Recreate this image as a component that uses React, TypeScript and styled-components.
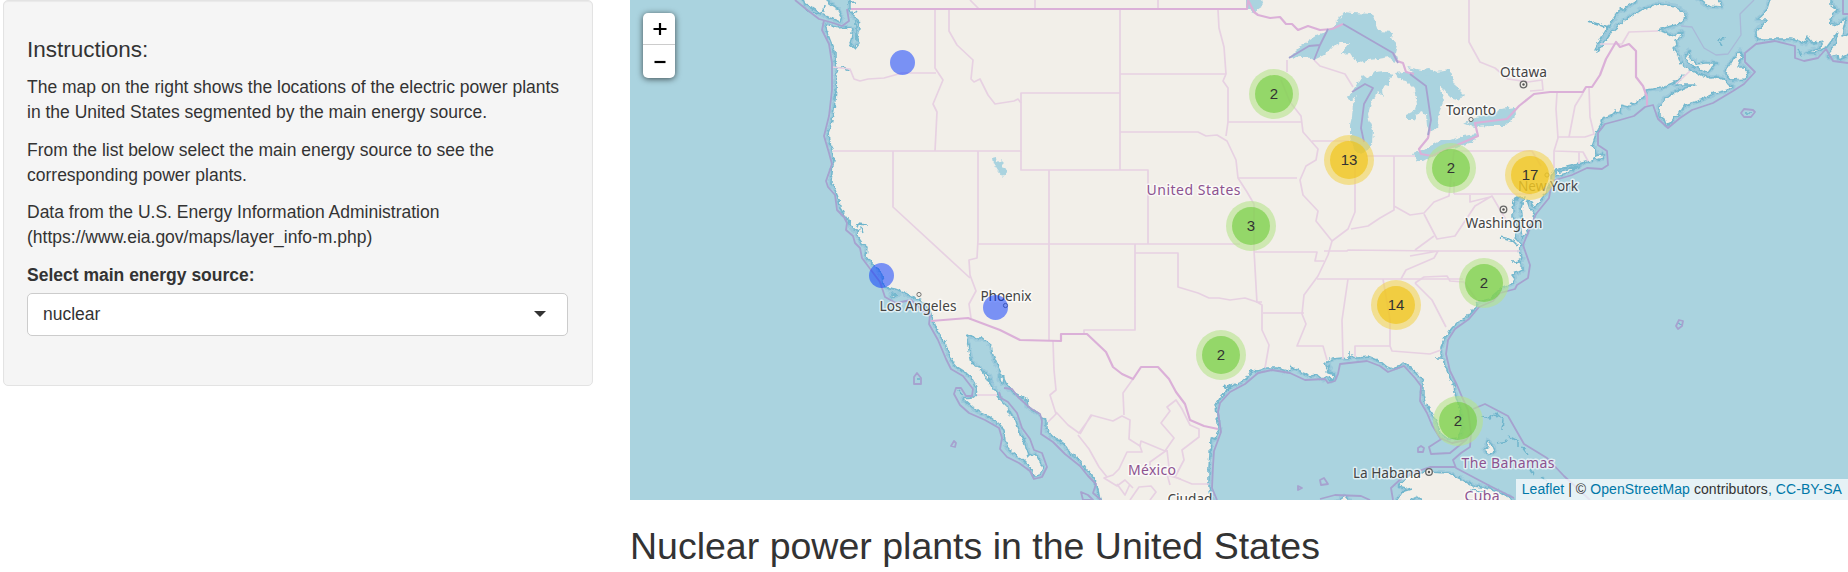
import React from 'react';
import styled, { createGlobalStyle } from 'styled-components';

const Global = createGlobalStyle`
  * { box-sizing: border-box; }
  body { margin: 0; background: #fff; color: #333; overflow: hidden;
    font: 17.5px/25px "Liberation Sans", Arial, sans-serif; }
`;

const Page = styled.main`
  display: grid;
  grid-template-columns: 590px 1218px;
  column-gap: 37px;
  padding-left: 3px;
  height: 572px;
  align-items: start;
`;
const Well = styled.aside`
  height: 386px;
  padding: 36px 24px 0 23px;
  background: #f5f5f5;
  border: 1px solid #e3e3e3;
  border-radius: 5px;
  box-shadow: inset 0 1px 1px rgba(0, 0, 0, 0.05);
`;
const Title = styled.h4`
  margin: 0 0 13px;
  font-size: 22.5px;
  font-weight: 400;
  line-height: 25px;
`;
const Paragraph = styled.p`
  margin: 0 0 12.5px;
`;
const Label = styled.label`
  display: block;
  margin-bottom: 5px;
  font-weight: 700;
`;
const Select = styled.div`
  display: flex;
  align-items: center;
  justify-content: space-between;
  height: 43px;
  padding: 0 21px 0 15px;
  background: #fff;
  border: 1px solid #ccc;
  border-radius: 5px;
`;
const Caret = styled.i`
  border: 6px solid transparent;
  border-top-color: #333;
  border-bottom: 0;
`;
const Content = styled.section`
  display: flex;
  flex-direction: column;
`;
const MapFrame = styled.div`
  position: relative;
  height: 500px;
  overflow: hidden;
  background: #aad3df;
`;
const MapDrawing = styled.svg`
  display: block;
`;
const Zoom = styled.div`
  position: absolute;
  left: 13px;
  top: 13px;
  width: 32px;
  border-radius: 5px;
  background: #fff;
  box-shadow: 0 1px 6px rgba(0, 0, 0, 0.65);
`;
const ZoomButton = styled.button`
  display: flex;
  align-items: center;
  justify-content: center;
  width: 32px;
  height: 31px;
  padding: 0 0 0 1px;
  border: 0;
  background: none;
  & + & { border-top: 1px solid #ccc; height: 34px; }
`;
const Cluster = styled.div<{ $x: number; $y: number; $tone: 'green' | 'yellow' }>`
  position: absolute;
  left: ${p => p.$x - 25}px;
  top: ${p => p.$y - 25}px;
  width: 50px;
  height: 50px;
  padding: 6px;
  border-radius: 50%;
  background: ${p => (p.$tone === 'green' ? 'rgba(181,226,140,.6)' : 'rgba(241,211,87,.6)')};
`;
const Count = styled.span<{ $tone: 'green' | 'yellow' }>`
  display: block;
  border-radius: 50%;
  height: 38px;
  text-align: center;
  font-size: 15px;
  line-height: 38px;
  background: ${p => (p.$tone === 'green' ? 'rgba(110,204,57,.6)' : 'rgba(240,194,12,.6)')};
`;
const Plant = styled.div<{ $x: number; $y: number }>`
  position: absolute;
  left: ${p => p.$x - 12.5}px;
  top: ${p => p.$y - 12.5}px;
  width: 25px;
  height: 25px;
  border-radius: 50%;
  background: rgba(0, 51, 255, 0.5);
`;
const Attribution = styled.footer`
  position: absolute;
  right: 0;
  bottom: 0;
  height: 21px;
  padding: 0 6px;
  font-size: 14px;
  letter-spacing: 0.07px;
  line-height: 20px;
  white-space: nowrap;
  background: rgba(255, 255, 255, 0.7);
`;
const Link = styled.a`
  color: #0078a8;
`;
const Heading = styled.h2`
  margin: 26px 0 0;
  font-size: 37.5px;
  font-weight: 400;
  line-height: 41px;
`;

const mainland =
  'M1641 -8L1635 2 1618 12 1606 30 1595 50 1598 51 1611 32 1625 20 1641 10 1658 4 1675 6 1684 12 1686 17 1681 23 1668 27 1658 30 1664 32 1671 36 1683 32 1682 36 1676 40 1677 45 1674 48 1678 55 1681 63 1686 67 1701 75 1711 78 1718 77 1725 80 1728 85 1733 86 1728 90 1715 93 1701 100 1685 105 1680 113 1675 117 1672 122 1666 125 1664 119 1659 116 1659 107 1663 101 1675 92 1685 88 1695 85 1676 85 1683 75 1675 82 1661 88 1646 90 1645 97 1638 100 1635 104 1631 103 1629 107 1621 105 1620 113 1616 111 1612 115 1603 118 1601 124 1597 131 1595 137 1593 143 1591 146 1595 149 1596 155 1591 161 1583 163 1571 166 1555 170 1551 176 1551 183 1543 197 1535 208 1531 202 1527 200 1530 209 1534 213 1532 222 1527 232 1522 239 1521 229 1523 220 1521 208 1524 198 1519 197 1513 206 1513 217 1516 224 1517 230 1515 238 1522 245 1519 251 1522 258 1517 262 1522 266 1522 270 1512 275 1515 279 1513 283 1503 287 1497 293 1490 299 1478 302 1473 310 1467 317 1458 322 1452 328 1445 338 1441 347 1441 355 1443 360 1448 373 1454 385 1455 393 1460 410 1462 428 1458 438 1448 439 1440 433 1437 423 1432 413 1426 405 1423 395 1423 382 1417 373 1410 367 1403 363 1398 367 1392 369 1387 367 1380 361 1370 357 1357 358 1352 355 1348 359 1342 358 1332 359 1325 363 1327 368 1330 366 1327 372 1334 373 1335 378 1331 381 1328 376 1323 379 1318 375 1310 376 1303 373 1293 368 1288 371 1277 368 1267 368 1257 371 1252 370 1247 377 1240 383 1230 387 1225 392 1220 398 1216 405 1217 417 1219 428 1216 437 1211 440 1210 453 1209 467 1209 487 1215 510 1102 510 1098 490 1095 480 1087 470 1077 458 1070 453 1063 443 1053 437 1046 429 1046 420 1037 413 1028 407 1027 400 1013 392 1007 385 1003 377 998 367 993 355 991 345 982 338 975 338 968 334 967 340 969 350 972 363 980 368 987 378 992 387 997 392 1000 400 1007 407 1010 415 1015 418 1018 427 1022 437 1026 447 1029 456 1035 454 1038 458 1043 468 1040 475 1034 476 1030 467 1023 460 1013 453 1008 448 1005 440 1004 429 998 423 990 417 980 413 972 407 963 399 972 398 976 395 977 387 972 378 965 372 957 367 953 362 948 352 945 342 938 332 933 320 930 310 923 302 915 298 903 292 895 289 884 287 882 275 877 268 870 262 866 257 867 247 862 243 857 236 859 230 853 230 850 223 845 216 840 208 839 200 835 190 831 183 832 172 834 160 832 150 829 140 828 133 831 125 834 110 836 90 837 75 835 60 834 50 830 40 827 32 825 24 830 25 838 28 846 27 853 29 851 40 850 44 855 48 859 43 857 36 860 30 858 20 853 16 850 10 850 -8Z';

const islands = [
  'M800 -8L805 4 812 8 820 13 830 18 840 22 842 16 838 9 830 4 823 -8Z',
  'M1772 -8L1766 12 1757 20 1767 20 1756 32 1757 39 1773 39 1790 39 1806 43 1808 37 1813 43 1824 41 1819 49 1805 53 1815 53 1827 47 1838 32 1835 45 1829 52 1829 57 1838 55 1839 60 1846 57 1856 48 1856 29 1842 36 1846 18 1838 25 1829 23 1833 14 1838 10 1831 5 1831 -8Z',
  'M1695 -4L1708 6 1722 7 1720 1 1714 -4Z',
  'M1740 51L1742 56 1738 67 1744 67 1749 73 1746 79 1731 80 1726 74 1727 68 1733 60Z',
  'M1689 51L1685 57 1690 65 1702 70 1708 73 1714 65 1718 63 1706 63 1697 64 1690 58Z',
  'M1555 172L1565 170 1579 166 1568 173 1556 176Z',
  'M1593 157L1603 154 1603 158 1597 160Z',
  'M1488 441L1493 446 1495 451 1490 454 1484 450 1487 447Z',
  'M1391 510L1406 488 1398 486 1410 475 1426 472 1448 473 1463 480 1473 486 1490 488 1510 497 1518 510 1432 510 1418 497Z',
  'M1331 506L1345 496 1354 506Z',
  'M983 371L989 376 990 381 985 377Z M1000 375L1004 377 1003 383 1000 380Z M892 294L898 295 892 297Z'
];

const lakes = [
  'M1289 58L1302 45 1317 35 1329 31 1339 19 1344 12 1353 13 1372 14 1378 31 1393 32 1391 38 1397 45 1395 53 1399 59 1393 63 1390 57 1378 59 1369 60 1362 63 1355 61 1350 53 1341 54 1349 43 1340 43 1333 46 1324 55 1314 60 1308 57 1300 57Z',
  'M1350 101L1348 98 1357 84 1363 75 1368 79 1375 72 1384 71 1393 74 1389 80 1389 86 1385 85 1383 90 1384 97 1378 91 1372 100 1368 114 1369 120 1373 130 1372 143 1366 153 1355 152 1350 137 1350 125 1352 117 1353 104 1357 95Z',
  'M1395 73L1412 71 1437 75 1440 89 1444 100 1439 113 1437 128 1430 131 1427 126 1426 114 1420 111 1414 119 1407 119 1407 114 1415 110 1417 104 1414 88 1407 81 1400 80Z',
  'M1407 67L1422 70 1430 69 1437 72 1450 70 1453 81 1457 88 1465 96 1460 97 1461 101 1453 99 1447 93 1444 89 1438 84 1436 78 1428 76 1412 71Z',
  'M1413 154L1425 149 1441 140 1450 140 1463 136 1478 134 1473 142 1450 149 1439 153 1424 161 1417 161Z',
  'M1464 124L1475 118 1498 112 1500 109 1515 107 1516 116 1506 126 1490 126 1475 127Z',
  'M992 158L996 157 997 162 1001 161 1004 164 1001 167 1004 168 1008 171 1003 177 998 171 993 163Z',
  'M1246 -4L1246 8 1254 12 1263 6 1260 -4Z'
];

const nationalBorders = [
  'M851 9H1247L1248 0 1254 12 1258 15 1270 18 1280 17 1286 24 1292 24 1298 30 1308 26 1320 30 1332 29 1343 24',
  'M1393 53L1397 61 1403 63 1406 72 1414 74',
  'M1430 128L1428 138 1419 149 1421 154 1432 156 1444 150 1457 145 1478 136 1475 123 1507 119 1519 106 1534 94 1550 92 1583 92 1586 87 1592 87 1600 75 1606 59 1616 42 1620 47 1629 44 1636 51 1636 77 1643 86 1647 97 1647 106',
  'M931 321L968 318 1000 330 1020 340 1061 341 1061 334 1087 334 1106 352 1113 367 1122 374 1133 379 1141 367 1158 367 1169 379 1176 392 1185 404 1190 420 1204 426 1218 429'
];

const waterBorders = [
  'M1343 24L1393 53 1398 63 M1289 58L1309 46 1320 45 1314 60 M1328 29L1320 45',
  'M1410 74L1426 86 1431 120 1428 135 M1352 92L1365 84 1373 88 1364 104 1361 128 1364 142'
];

const stateBorders = [
  'M1035 0V9 M1158 0V9 M970 0L979 9 M1469 0V42L1480 62 1495 68 1508 79 1528 82 1542 80 1543 90 1530 91',
  'M832 67L850 69 854 79 860 81 868 79 884 78 902 73H936 M935 10V68L943 80 933 104 937 112 935 151',
  'M833 151H1021V93H1120 M893 151V207L970 278 M978 151V240L977 258 969 260 970 275 976 291 969 304 971 318',
  'M949 10V31L957 45 973 60 971 79 974 82 980 79 988 95 995 104 1014 101 1018 99 1021 103',
  'M1021 151V170H1148V244 M1120 10V170 M1049 170V340 M978 244H1240 M1120 74H1226 M1120 132H1198L1206 136 1217 135 1227 141 1236 160 1238 178 1247 192 1254 204V250L1257 303',
  'M1218 10L1219 28 1224 47 1226 74 1223 81 1228 88V122L1226 136',
  'M1228 122H1301 M1287 60V72 M1281 80L1290 102 1301 116 1303 132 1318 149 1316 160 1306 166 1300 180 1303 195 1318 211 1316 221 1332 241 1328 255 1318 276 1304 295 1302 314 1306 324 1297 346H1323L1327 360',
  'M1238 178H1297 M1312 141H1349 M1366 156H1415 M1355 160V212L1348 229 1332 241 M1394 156V210L1380 218 1368 226 1351 229 M1394 206L1410 215 1424 213 1434 202 1449 196 1454 151H1532L1541 166 M1454 194H1532 M1454 182V194',
  'M1314 60L1320 66 1345 74 1353 87 M1254 252H1317L1315 261 1324 261 M1324 251H1347L1348 250 1438 251 1410 256 M1317 279H1463 M1348 279L1342 320 1343 359 M1383 279L1390 320 1390 346H1355V357 M1390 346L1392 351 1430 354 1441 350',
  'M1424 214L1437 239 1455 236 1475 206 1492 196 1506 220 M1470 195V202L1490 197 M1415 250L1434 236 M1438 251H1520 M1401 279L1406 270 1434 258 1438 251 M1415 283L1424 277 1447 276 1450 281 1464 282 1478 302 M1415 283L1432 300 1446 327',
  'M1135 244V330H1084V334 M1135 253H1178V287L1198 293 1209 298 1219 298 1230 300 1245 298 1257 302 1262 305V330L1269 345 1265 368 M1257 302H1262 M1263 313H1304',
  'M1557 93L1556 109 1558 138 1554 151 1554 168 M1583 93L1575 106 1569 137 M1589 87L1590 117 1594 134 1585 137H1557 M1555 151L1583 152 1588 161 M1579 152V164 M1600 44L1622 44 1629 32 1658 31 M1676 84L1690 71',
  'M1053 341L1054 370 1056 390 1050 395 1056 414 1048 422 M1056 412L1068 425 1079 433 1092 415 M1078 435L1089 449 1099 467 1107 477 M1080 434L1091 415 1113 421 1122 416 1130 420 1129 439 1140 446 1141 441 1165 451 1174 438 1161 423 1170 411 1167 407 1176 400 1182 409 1190 425 1199 429 1199 437 1182 450 1184 460 1175 477 1192 484H1209',
  'M1133 379L1123 393 1124 415 M1140 446L1142 452 1127 452 1119 469 1113 475 1104 478 1117 486 1125 480 1133 488 M1167 450L1150 462 1150 474 1167 474 1170 485 M1167 450L1170 476 1181 479 M1130 500L1139 487 1151 486 1156 492 1150 500 M1117 484L1125 495 1130 484 M977 395H997'
];

const maritime = [
  'M795 0L806 9 819 19 830 22 842 26 849 21 847 9 M824 20L822 30 829 44 832 63 832 90 829 116 824 136 829 153 832 164 826 181 828 187 835 195 837 210 844 217 847 223 846 230 853 236 855 243 860 248 862 258 871 270 880 282 885 297 896 303 911 300 920 308 924 312 930 315 929 324 938 340 946 359 951 369 963 376 973 389 972 396 966 396 961 388 956 388 954 394 960 405 969 413 985 420 999 428 1002 438 1000 449 1007 457 1019 463 1030 471 1034 479 1042 477 1047 467 1042 453 1034 450 1030 439 1022 428 1017 413 1008 402 1001 398 999 392',
  'M1004 388L1012 389 1018 397 1030 408 1040 414 1042 421 1041 434 1053 442 1065 454 1080 466 1088 476 1096 484 1093 493 1101 500',
  'M1217 500L1212 488 1213 466 1214 451 1221 432 1218 412 1220 403 1230 392 1245 384 1258 373 1272 370 1290 373 1305 380 1325 379 1328 383 1335 381 1338 374 1340 364 1367 361 1380 366 1388 372 1404 366 1415 378 1421 386 1420 401 1427 413 1432 425 1440 438 1452 443 1466 440 1471 433 1468 410 1462 397 1457 385 1450 371 1446 354 1448 340 1455 329 1469 319 1479 307 1493 301 1500 293 1515 289 1517 285 1528 278 1530 265 1523 245 1528 233 1536 214 1549 198 1552 181 1572 175 1587 168 1602 169 1608 165 1607 151 1598 145 1598 133 1605 124 1620 120 1634 116 1645 107 1653 105 1658 119 1668 128 1680 118 1692 110 1713 103 1733 91 1744 84 1755 72 1745 62 1745 53 1756 44 1775 41 1795 46 1795 58 1804 61 1818 58 1826 49 1833 61 1848 63',
  'M1843 0V14H1848',
  'M1473 409L1485 404 1508 416 1524 444 1547 458 1564 476 1590 500 M1471 433L1470 447 1461 453 1453 460 1456 468 1490 486 1514 498 M1443 438L1429 447 1431 454 1450 453 1466 440 M1456 467H1430L1404 476 1391 488 1393 500 M1320 499L1335 495 1361 496 1370 500'
];
const smallRings = [
  'M917 373L914 377 914 384 921 384 921 378Z', 'M954 441L951 446 955 447 956 443Z',
  'M1741 113L1744 109 1753 110 1755 112 1751 117 1744 117Z', 'M1676 326L1679 320 1683 321 1682 326 1678 329Z',
  'M1418 448L1421 446 1424 448 1423 452 1418 452Z', 'M1320 480L1324 478 1328 484 1321 485Z',
  'M1298 486V490L1302 488Z', 'M1081 492L1088 495 1093 500H1083Z'
];
const gulfBoundary = 'M1681 26L1692 27 1704 48 1716 55 1728 54 1741 35 1740 14 1754 0';
const coastDetail = [
  'M835 67H843L850 70 M852 15L857 10 M856 20V40 M847 3L855 2 M836 52V64 M857 228L858 224 868 225 M861 226L863 234 M806 10L817 14 823 11 824 4',
  'M1588 21L1598 24 1608 28 M1722 46L1718 40 1725 38 M1500 237L1512 240 1518 246 M1512 209L1513 201 1518 198 M1511 262H1521 M1436 358H1442 M1223 386L1228 389 M1251 368V376 M1349 352V359',
  'M1480 416L1490 418 1497 413 1503 419 1502 430 M1495 413L1498 417 M1508 436L1518 441 1518 447 M1497 443L1508 441 M1522 447L1528 455 M1530 470L1534 476 M1541 477L1547 480 M1678 325L1682 324 M917 379H921 M959 390L962 395 M1798 49L1801 56 M1745 113H1752',
  'M1224 388L1231 385 1229 390 M1290 366L1295 369 M1470 489L1484 493 M1401 492L1411 489'
];

const cities: [number, number, number][] = [
  [919, 294.5, 0], [1005.5, 305.5, 0], [1523.5, 84.5, 1], [1471, 119.5, 0],
  [1503.5, 209.5, 1], [1547, 175, 0], [1429, 472, 1]
];
const labels: [number, number, string, 'city' | 'country', number][] = [
  [918, 311, 'Los Angeles', 'city', 77], [1006, 301, 'Phoenix', 'city', 51],
  [1523.5, 77, 'Ottawa', 'city', 47], [1471, 115, 'Toronto', 'city', 50],
  [1504, 228, 'Washington', 'city', 77], [1548, 190.5, 'New York', 'city', 60],
  [1387, 478, 'La Habana', 'city', 68], [1190, 504, 'Ciudad', 'city', 45],
  [1193.5, 194.5, 'United States', 'country', 94], [1152, 475, 'México', 'country', 48],
  [1508, 468, 'The Bahamas', 'country', 93], [1482, 501, 'Cuba', 'country', 35]
];
const clusters: [number, number, number][] = [
  [1274, 94, 2], [1349, 160, 13], [1451, 168, 2], [1530, 175, 17], [1251, 226, 3],
  [1484, 283, 2], [1396, 305, 14], [1221, 355, 2], [1458, 421, 2]
];
const plants: [number, number][] = [[902.5, 62.5], [881.5, 275], [995, 307.5]];

const ORIGIN = 630;

function BaseMap() {
  return (
    <MapDrawing width="1218" height="500" viewBox={`${ORIGIN} 0 1218 500`}>
      <defs>
        <filter id="ragged" filterUnits="userSpaceOnUse" x={ORIGIN} y="-8" width="1218" height="516">
          <feTurbulence type="fractalNoise" baseFrequency="0.22" numOctaves="2" seed="4" result="noise" />
          <feDisplacementMap in="SourceGraphic" in2="noise" scale="5" xChannelSelector="R" yChannelSelector="G" />
        </filter>
      </defs>
      <g filter="url(#ragged)">
        <g fill="none" stroke="#8fc0d8" strokeWidth="5" strokeOpacity="0.5" strokeLinejoin="round">
          <path d={mainland} />
          {islands.map(d => <path key={d} d={d} />)}
        </g>
        <g fill="#f2efe9" stroke="#74b8ce" strokeWidth="1.5" strokeLinejoin="round">
          <path d={mainland} />
          {islands.map(d => <path key={d} d={d} />)}
        </g>
        <g fill="none" stroke="#6fb5cc" strokeWidth="1.5">{coastDetail.map(d => <path key={d} d={d} />)}</g>
        <g fill="#aad3df">{lakes.map(d => <path key={d} d={d} />)}</g>
      </g>
      <g fill="none" strokeLinejoin="round">
        <g stroke="#e7d1e2" strokeWidth="1.7">{stateBorders.map(d => <path key={d} d={d} />)}</g>
        <g stroke="#dbb0d8" strokeWidth="2.2">{nationalBorders.map(d => <path key={d} d={d} />)}</g>
        <path d={gulfBoundary} stroke="#a9b9d8" strokeWidth="1.3" />
        <g stroke="#a6a2cf" strokeWidth="1.8">
          {[...waterBorders, ...maritime, ...smallRings].map(d => <path key={d} d={d} />)}
        </g>
      </g>
      <g stroke="#666" fill="#f2efe9">
        {cities.map(([x, y, capital]) => (
          <g key={x}>
            <circle cx={x} cy={y} r={capital ? 3.3 : 2.1} strokeWidth={capital ? 1.3 : 0.9} />
            {capital ? <circle cx={x} cy={y} r="1.2" fill="#555" stroke="none" /> : null}
          </g>
        ))}
      </g>
      <g fontFamily='"Noto Sans", sans-serif' textAnchor="middle" paintOrder="stroke"
        stroke="#fff" strokeOpacity="0.65" strokeWidth="3" strokeLinejoin="round">
        {labels.map(([x, y, text, kind, w]) => (
          <text key={text} x={x} y={y} textLength={w} fontSize={kind === 'city' ? 13.7 : 14}
            fill={kind === 'city' ? '#444' : '#8d5390'}>{text}</text>
        ))}
      </g>
    </MapDrawing>
  );
}

export default function App() {
  return (
    <>
      <Global />
      <Page>
        <Well>
          <Title>Instructions:</Title>
          <Paragraph>The map on the right shows the locations of the electric power plants in the United States segmented by the main energy source.</Paragraph>
          <Paragraph>From the list below select the main energy source to see the corresponding power plants.</Paragraph>
          <Paragraph>Data from the U.S. Energy Information Administration (https://www.eia.gov/maps/layer_info-m.php)</Paragraph>
          <Label>Select main energy source:</Label>
          <Select>nuclear<Caret /></Select>
        </Well>
        <Content>
          <MapFrame>
            <BaseMap />
            {plants.map(([x, y]) => <Plant key={x} $x={x - ORIGIN} $y={y} />)}
            {clusters.map(([x, y, n]) => {
              const tone = n > 9 ? 'yellow' : 'green';
              return (
                <Cluster key={x} $x={x - ORIGIN} $y={y} $tone={tone}>
                  <Count $tone={tone}>{n}</Count>
                </Cluster>
              );
            })}
            <Zoom>
              <ZoomButton aria-label="Zoom in">
                <svg width="14" height="14"><path d="M7 1V13M0.5 7H13.5" stroke="#000" strokeWidth="2.2" /></svg>
              </ZoomButton>
              <ZoomButton aria-label="Zoom out">
                <svg width="12" height="14"><path d="M0.5 7H11.5" stroke="#000" strokeWidth="2.2" /></svg>
              </ZoomButton>
            </Zoom>
            <Attribution>
              <Link>Leaflet</Link> | © <Link>OpenStreetMap</Link> contributors<Link>, CC-BY-SA</Link>
            </Attribution>
          </MapFrame>
          <Heading>Nuclear power plants in the United States</Heading>
        </Content>
      </Page>
    </>
  );
}
